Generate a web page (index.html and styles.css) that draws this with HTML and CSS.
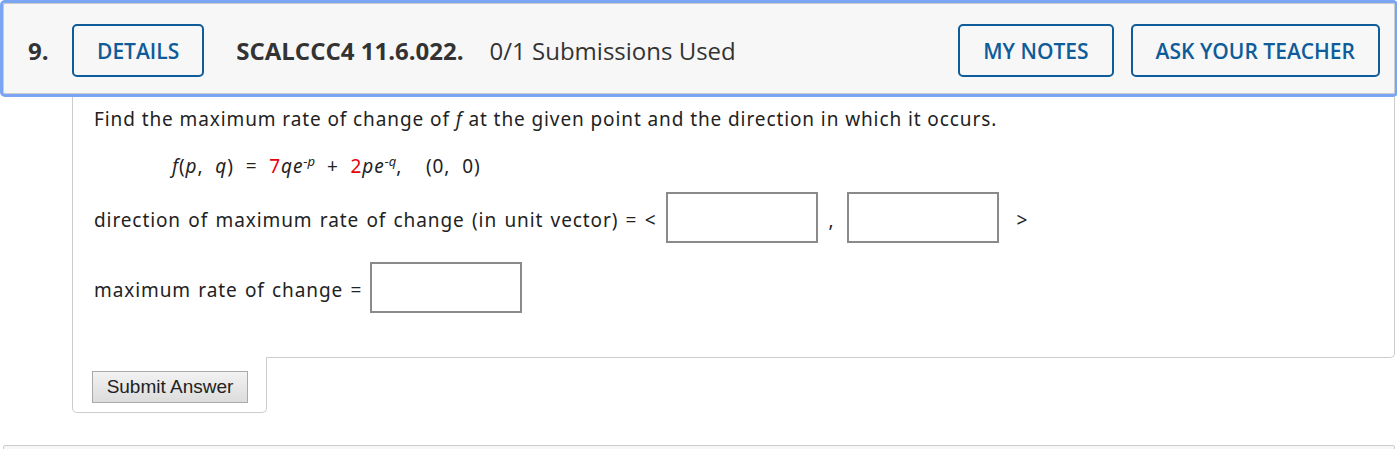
FILE: index.html
```html
<!DOCTYPE html>
<html lang="en">
<head>
	<meta charset="UTF-8">
	<meta name="viewport" content="width=device-width, initial-scale=1.0">
	<title>Question 9</title>

	<link rel="stylesheet" href="styles.css">

</head>
<body>
	<div class="page">
		<div class="question">
			<div class="qheader">
				<span class="qnum">9.</span>
				<div class="btn">DETAILS</div>
				<span class="qref">SCALCCC4 11.6.022.</span>
				<span class="qsubs">0/1 Submissions Used</span>
				<div class="spacer"></div>
				<div class="btn">MY NOTES</div>
				<div class="btn">ASK YOUR TEACHER</div>
			</div>

			<div class="qbody">
				<p class="prompt">Find the maximum rate of change of <i>f</i> at the given point and the direction in which it occurs.</p>
				<p class="formula"><i>f</i>(<i>p</i>, <i>q</i>) = <span class="red">7</span><i>qe</i><sup>-<i>p</i></sup> + <span class="red">2</span><i>pe</i><sup>-<i>q</i></sup>,&nbsp; (0, 0)</p>

				<div class="row row-dir">
					<span>direction of maximum rate of change (in unit vector) = &lt;</span>
					<input class="answer" type="text">
					<span class="comma">,</span>
					<input class="answer" type="text">
					<span class="close">&gt;</span>
				</div>

				<div class="row row-max">
					<span>maximum rate of change =</span>
					<input class="answer" type="text">
				</div>
			</div>

			<div class="qfooter">
				<button class="submit">Submit Answer</button>
			</div>
		</div>

		<div class="qheader next"></div>
	</div>
</body>
</html>
```

FILE: styles.css
```css
body {
	margin: 0;
	background: #fff;
}

.page {
	padding: 3px 2px 0 3px;
}

.qheader {
	display: flex;
	align-items: center;
	height: 91px;
	box-sizing: border-box;
	padding: 20px 14px 16px 24px;
	background-color: #f7f7f7;
	border: 1px solid #ccc;
	border-radius: 2px;
	outline: 3px solid #7ba4f4;
	font-family: "Open Sans", "Noto Sans", sans-serif;
	color: #333;
}

.qnum {
	width: 44px;
	font-size: 24px;
	font-weight: 700;
}

.btn {
	display: flex;
	align-items: center;
	height: 53px;
	box-sizing: border-box;
	padding: 0 23px;
	border: 2px solid #0e5c99;
	border-radius: 5px;
	color: #0e5c99;
	font-size: 21px;
	font-weight: 600;
	background: transparent;
}

.btn + .btn {
	margin-left: 17px;
}

.qref {
	margin-left: 32px;
	font-size: 24px;
	font-weight: 700;
}

.qsubs {
	margin-left: 26px;
	font-size: 24px;
}

.spacer {
	flex: 1;
}

/* verdana-ish body text: loose tracking */
.qbody {
	margin-left: 69px;
	padding: 13px 21px 44px 21px;
	border: 1px solid #ccc;
	border-top: none;
	border-bottom-right-radius: 5px;
	font-family: "Noto Sans", "Open Sans", sans-serif;
	font-size: 19px;
	letter-spacing: 0.9px;
	color: #222;
}

.qbody p {
	margin: 0;
	line-height: 24px;
}

.formula {
	margin-top: 23px !important;
	padding-left: 78px;
	word-spacing: 6px;
}

.formula sup {
	font-size: 13px;
	line-height: 0;
	letter-spacing: 0;
}

.red {
	color: #e8000b;
}

.row {
	display: flex;
	align-items: center;
	word-spacing: 1.5px;
}

.row span {
	padding-top: 5px;
}

.row-dir {
	margin-top: 14px;
}

.row-max {
	margin-top: 19px;
}

.answer {
	width: 152px;
	height: 51px;
	box-sizing: border-box;
	margin: 0 0 0 10px;
	border: 2px solid #8a8a8a;
	background: #fff;
}

.row-max .answer {
	margin-left: 8px;
}

.comma {
	margin: 0 3px 0 10px;
}

.close {
	margin-left: 17px;
}

.qfooter {
	width: 195px;
	margin-left: 69px;
	margin-top: -1px;
	padding: 14px 0 9px 19px;
	box-sizing: border-box;
	border: 1px solid #ccc;
	border-top: none;
	border-radius: 0 0 5px 5px;
	background: #fff;
}

.submit {
	display: block;
	width: 156px;
	height: 32px;
	padding: 0;
	border: 1px solid #aaa;
	border-radius: 0;
	background: linear-gradient(#f2f2f2, #dcdcdc);
	font-family: "Liberation Sans", Arial, sans-serif;
	font-size: 19px;
	color: #222;
}

.qheader.next {
	margin-top: 32px;
	outline: none;
}
```
